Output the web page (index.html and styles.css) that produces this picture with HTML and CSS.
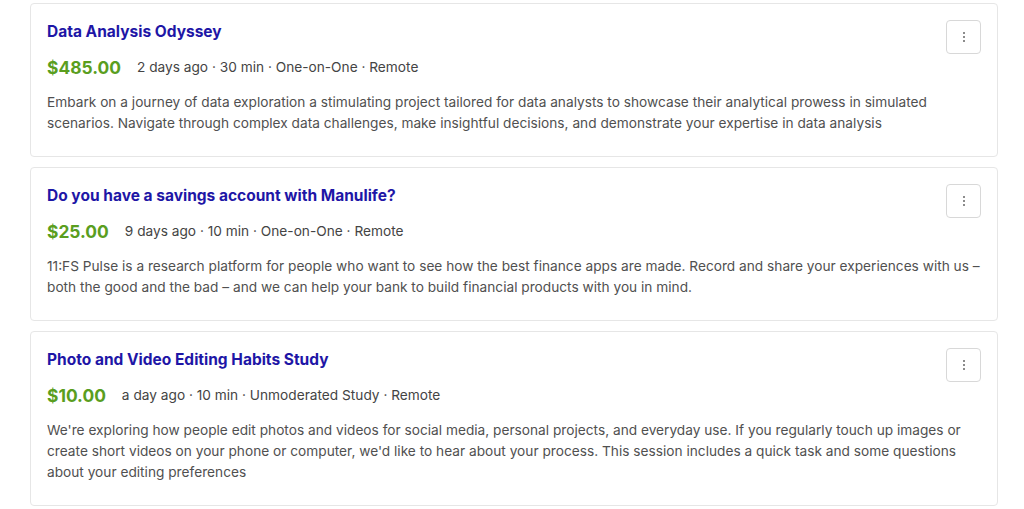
FILE: index.html
```html
<!DOCTYPE html>
<html lang="en">
<head>
<meta charset="utf-8">
<title>Studies</title>
<link rel="stylesheet" href="styles.css">
</head>
<body>
<div class="list">
  <div class="card">
    <div class="card-head">
      <div class="card-main">
        <h2 class="title">Data Analysis Odyssey</h2>
        <div class="info">
          <span class="price">$485.00</span>
          <span class="meta">2 days ago · 30 min · One-on-One · Remote</span>
        </div>
      </div>
      <button class="more" aria-label="More options"><svg width="4" height="12" viewBox="0 0 4 12"><circle cx="2" cy="2" r="1" /><circle cx="2" cy="6" r="1" /><circle cx="2" cy="10" r="1" /></svg></button>
    </div>
    <p class="desc">Embark on a journey of data exploration a stimulating project tailored for data analysts to showcase their analytical prowess in simulated scenarios. Navigate through complex data challenges, make insightful decisions, and demonstrate your expertise in data analysis</p>
  </div>
  <div class="card">
    <div class="card-head">
      <div class="card-main">
        <h2 class="title">Do you have a savings account with Manulife?</h2>
        <div class="info">
          <span class="price">$25.00</span>
          <span class="meta">9 days ago · 10 min · One-on-One · Remote</span>
        </div>
      </div>
      <button class="more" aria-label="More options"><svg width="4" height="12" viewBox="0 0 4 12"><circle cx="2" cy="2" r="1" /><circle cx="2" cy="6" r="1" /><circle cx="2" cy="10" r="1" /></svg></button>
    </div>
    <p class="desc">11:FS Pulse is a research platform for people who want to see how the best finance apps are made. Record and share your experiences with us – both the good and the bad – and we can help your bank to build financial products with you in mind.</p>
  </div>
  <div class="card">
    <div class="card-head">
      <div class="card-main">
        <h2 class="title">Photo and Video Editing Habits Study</h2>
        <div class="info">
          <span class="price">$10.00</span>
          <span class="meta">a day ago · 10 min · Unmoderated Study · Remote</span>
        </div>
      </div>
      <button class="more" aria-label="More options"><svg width="4" height="12" viewBox="0 0 4 12"><circle cx="2" cy="2" r="1" /><circle cx="2" cy="6" r="1" /><circle cx="2" cy="10" r="1" /></svg></button>
    </div>
    <p class="desc">We're exploring how people edit photos and videos for social media, personal projects, and everyday use. If you regularly touch up images or create short videos on your phone or computer, we'd like to hear about your process. This session includes a quick task and some questions about your editing preferences</p>
  </div>
</div>
</body>
</html>
```
FILE: styles.css
```css
* { box-sizing: border-box; }
html, body { margin: 0; padding: 0; background: #ffffff; }
body {
  font-family: Inter, "Liberation Sans", sans-serif;
  color: #444;
}
.list {
  display: flex;
  flex-direction: column;
  gap: 10px;
  padding: 3px 26px 0 30px;
}
.card {
  border: 1px solid #e6e6e6;
  border-radius: 4px;
  padding: 16px 16px 22px 16px;
  background: #fff;
}
.card-head {
  display: flex;
  align-items: flex-start;
  gap: 16px;
}
.card-main { flex: 1; min-width: 0; }
.title {
  margin: 0;
  font-size: 15.5px;
  line-height: 24px;
  font-weight: 700;
  color: #1e16a6;
}
.info {
  margin-top: 9px;
  display: flex;
  align-items: center;
  gap: 16px;
  height: 28px;
}
.price {
  font-size: 17.4px;
  font-weight: 700;
  color: #5a9e1f;
}
.meta {
  font-size: 13.7px;
  color: #444;
}
.desc {
  margin: 11px 0 0;
  font-size: 13.7px;
  line-height: 21px;
  color: #505050;
}
.more {
  flex: none;
  width: 35px;
  height: 34px;
  margin-top: 0;
  border: 1px solid #d8d8d8;
  border-radius: 4px;
  background: #fff;
  display: flex;
  align-items: center;
  justify-content: center;
  padding: 0;
  fill: #666;
}
```
